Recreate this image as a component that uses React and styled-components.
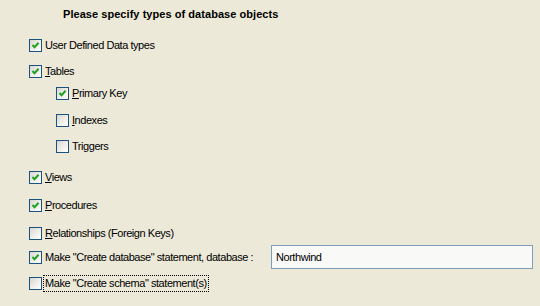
import React from "react";
import styled, { createGlobalStyle } from "styled-components";

const Global = createGlobalStyle`
  html, body { margin: 0; padding: 0; background: #ECE9D8; }
  body { font-family: Tahoma, "Liberation Sans", Arial, sans-serif; font-size: 11px; color: #000; }
  #root { width: 540px; height: 306px; overflow: hidden; }
`;

const Page = styled.div`
  width: 540px;
  height: 306px;
  box-sizing: border-box;
  padding: 8px 7px 0 29px;
  display: flex;
  flex-direction: column;
  background: #ECE9D8;
`;

const Title = styled.div`
  font-weight: bold;
  font-size: 11px;
  line-height: 13px;
  padding-left: 34px;
  letter-spacing: 0.05px;
`;

const Row = styled.div`
  display: flex;
  align-items: center;
  min-height: 13px;
  margin-top: ${(p) => p.$top}px;
  padding-left: ${(p) => (p.$level ? 27 : 0)}px;
`;

const Box = styled.span`
  box-sizing: border-box;
  width: 13px;
  height: 13px;
  flex: none;
  border: 1px solid #1C5180;
  background: linear-gradient(135deg, #D6D5CE 0%, #EEEDE7 50%, #FFFFFF 100%);
  display: flex;
  align-items: center;
  justify-content: center;
`;

const Label = styled.span`
  margin-left: 3px;
  line-height: 13px;
  white-space: nowrap;
  letter-spacing: -0.45px;
  ${(p) => p.$focus && `outline: 1px dotted #000; outline-offset: 1px;`}
`;

const Key = styled.span`
  text-decoration: underline;
`;

const TextBox = styled.div`
  margin-left: auto;
  box-sizing: border-box;
  width: 262px;
  height: 24px;
  border: 1px solid #7F9DB9;
  background: #F9F9F7;
  padding: 5px 0 0 4px;
  line-height: 13px;
  letter-spacing: -0.45px;
`;

function Check({ checked }) {
  return (
    <Box>
      {checked && (
        <svg width="9" height="9" viewBox="0 0 9 9">
          <path d="M1.5 4 L3.5 6.2 L7.6 1.8" fill="none" stroke="#21A121" strokeWidth="2" />
        </svg>
      )}
    </Box>
  );
}

function Option({ checked, top, level, children, focus, extra }) {
  return (
    <Row $top={top} $level={level}>
      <Check checked={checked} />
      <Label $focus={focus}>{children}</Label>
      {extra}
    </Row>
  );
}

export default function App() {
  return (
    <>
      <Global />
      <Page>
        <Title>Please specify types of database objects</Title>
        <Option checked top={18}>User Defined Data types</Option>
        <Option checked top={13}><Key>T</Key>ables</Option>
        <Option checked top={9} level={1}><Key>P</Key>rimary Key</Option>
        <Option top={14} level={1}><Key>I</Key>ndexes</Option>
        <Option top={13} level={1}>Tri<Key>g</Key>gers</Option>
        <Option checked top={18}><Key>V</Key>iews</Option>
        <Option checked top={15}><Key>P</Key>rocedures</Option>
        <Option top={15}><Key>R</Key>elationships (Foreign Keys)</Option>
        <Option checked top={5} extra={<TextBox>Northwind</TextBox>}>
          Make "Create database" statement, database :
        </Option>
        <Option top={8} focus>Make "Create schema" statement(s)</Option>
      </Page>
    </>
  );
}
